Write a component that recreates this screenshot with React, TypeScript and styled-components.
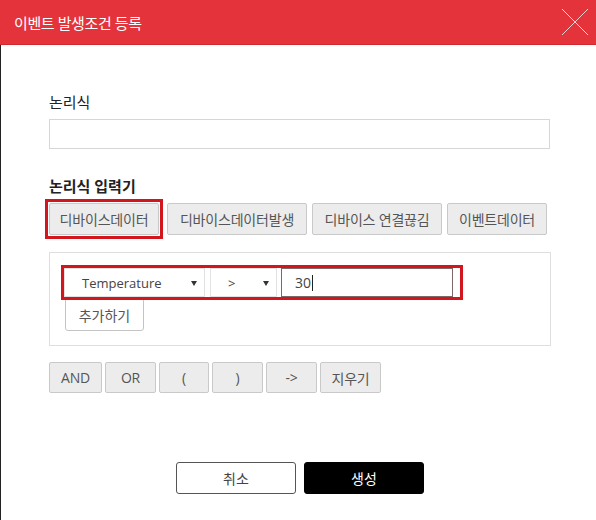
import React from 'react';
import styled, { createGlobalStyle } from 'styled-components';

const GlobalStyle = createGlobalStyle`
    html, body {
        margin: 0;
        padding: 0;
        background: #fff;
    }
    body {
        font-family: "Open Sans", "Noto Sans CJK KR", sans-serif;
        color: #333;
    }
    * {
        box-sizing: border-box;
    }
`;

const Dialog = styled.div`
    width: 596px;
    height: 520px;
    display: flex;
    flex-direction: column;
    background: #fff;
    overflow: hidden;
`;

const Header = styled.div`
    height: 45px;
    flex: none;
    display: flex;
    align-items: center;
    justify-content: space-between;
    padding: 0 6px 0 14px;
    background: #e4333a;
    border-bottom: 1px solid #d02a31;

    h1 {
        margin: 0;
        font-size: 15px;
        font-weight: normal;
        color: #fff;
        letter-spacing: -0.4px;
    }
`;

const CloseButton = styled.button`
    width: 30px;
    height: 30px;
    padding: 0;
    border: 0;
    background: transparent;
    display: flex;
    align-items: center;
    justify-content: center;
`;

const Body = styled.div`
    flex: 1;
    border-left: 1px solid #222;
    padding: 47px 45px 0 48px;
`;

const Label = styled.div<{ $bold?: boolean }>`
    font-size: 15px;
    line-height: 20px;
    color: #222;
    font-weight: ${(props) => (props.$bold ? 'bold' : 'normal')};
`;

const TextField = styled.input`
    display: block;
    width: 501px;
    height: 30px;
    margin: 7px 0 27px;
    border: 1px solid #d6d6d6;
    background: #fff;
    outline: none;
`;

const TabRow = styled.div`
    display: flex;
    align-items: center;
    gap: 5px;
    margin-top: 7px;
`;

const Highlight = styled.div`
    display: flex;
    border: 3px solid #d3161d;
    padding: 1px;
    margin: -4px -1px -4px -4px;
`;

const GrayButton = styled.button<{ $width: number }>`
    width: ${(props) => props.$width}px;
    height: 32px;
    padding: 0;
    border: 1px solid #c9c9c9;
    border-radius: 2px;
    background: #ececec;
    color: #555;
    font-family: inherit;
    font-size: 14px;
    letter-spacing: -0.2px;
`;

const Panel = styled.div`
    width: 502px;
    margin-top: 17px;
    padding: 12px 11px 14px;
    border: 1px solid #dedede;
`;

const ConditionRow = styled.div`
    display: inline-flex;
    align-items: center;
    height: 35px;
    padding: 0 7px 0 0;
    border: 3px solid #d3161d;
`;

const SelectBox = styled.div<{ $width: number }>`
    position: relative;
    width: ${(props) => props.$width}px;
    height: 29px;
    margin-right: 5px;
    padding-left: 17px;
    display: flex;
    align-items: center;
    border: 1px solid #e2e2e2;
    background: #fff;
    font-size: 13px;
    color: #444;

    &::after {
        content: '';
        position: absolute;
        right: 7px;
        top: 12px;
        border-left: 3px solid transparent;
        border-right: 3px solid transparent;
        border-top: 5px solid #333;
    }
`;

const ValueInput = styled.div`
    width: 172px;
    height: 29px;
    margin-left: -1px;
    padding-left: 13px;
    display: flex;
    align-items: center;
    border: 1px solid #7d6767;
    font-size: 14px;
    color: #444;

    span {
        display: inline-block;
        width: 1px;
        height: 16px;
        margin-left: 1px;
        background: #222;
    }
`;

const AddButton = styled.button`
    display: block;
    width: 79px;
    height: 33px;
    margin: -2px 0 0 4px;
    padding: 0;
    border: 1px solid #c4c4c4;
    border-radius: 3px;
    background: #fff;
    color: #555;
    font-family: inherit;
    font-size: 14px;
`;

const OperatorRow = styled.div`
    display: flex;
    gap: 3px;
    margin-top: 16px;

    button {
        height: 31px;
        font-size: 14px;
    }
`;

const Footer = styled.div`
    display: flex;
    justify-content: center;
    gap: 8px;
    margin-top: 69px;
`;

const FooterButton = styled.button<{ $primary?: boolean }>`
    width: 120px;
    height: 32px;
    border-radius: 3px;
    border: 1px solid ${(props) => (props.$primary ? '#000' : '#555')};
    background: ${(props) => (props.$primary ? '#000' : '#fff')};
    color: ${(props) => (props.$primary ? '#fff' : '#444')};
    font-family: inherit;
    font-size: 14px;
`;

const tabs = [
    { label: '디바이스데이터발생', width: 140 },
    { label: '디바이스 연결끊김', width: 130 },
    { label: '이벤트데이터', width: 100 },
];

const operators = [
    { label: 'AND', width: 53 },
    { label: 'OR', width: 51 },
    { label: '(', width: 50 },
    { label: ')', width: 51 },
    { label: '->', width: 51 },
    { label: '지우기', width: 61 },
];

export default function App() {
    return (
        <>
            <GlobalStyle />
            <Dialog>
                <Header>
                    <h1>이벤트 발생조건 등록</h1>
                    <CloseButton aria-label="close">
                        <svg width="28" height="28" viewBox="0 0 28 28">
                            <path d="M1 1 L27 27 M27 1 L1 27" stroke="#f6d4d5" strokeWidth="1" fill="none" />
                        </svg>
                    </CloseButton>
                </Header>

                <Body>
                    <Label>논리식</Label>
                    <TextField />

                    <Label $bold>논리식 입력기</Label>
                    <TabRow>
                        <Highlight>
                            <GrayButton $width={110}>디바이스데이터</GrayButton>
                        </Highlight>
                        {tabs.map((tab) => (
                            <GrayButton key={tab.label} $width={tab.width}>
                                {tab.label}
                            </GrayButton>
                        ))}
                    </TabRow>

                    <Panel>
                        <ConditionRow>
                            <SelectBox $width={141}>Temperature</SelectBox>
                            <SelectBox $width={67}>&gt;</SelectBox>
                            <ValueInput>
                                30<span />
                            </ValueInput>
                        </ConditionRow>
                        <AddButton>추가하기</AddButton>
                    </Panel>

                    <OperatorRow>
                        {operators.map((op) => (
                            <GrayButton key={op.label} $width={op.width}>
                                {op.label}
                            </GrayButton>
                        ))}
                    </OperatorRow>

                    <Footer>
                        <FooterButton>취소</FooterButton>
                        <FooterButton $primary>생성</FooterButton>
                    </Footer>
                </Body>
            </Dialog>
        </>
    );
}
